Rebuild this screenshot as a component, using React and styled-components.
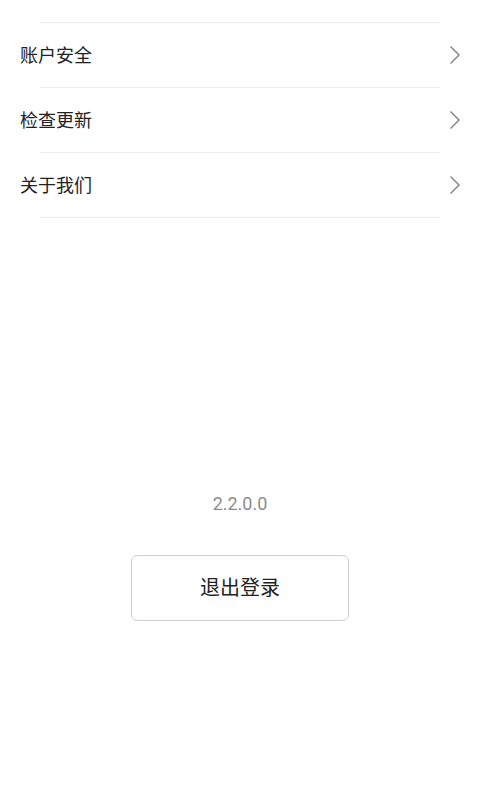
import React from "react";
import styled, { createGlobalStyle } from "styled-components";

const Global = createGlobalStyle`
  html, body { margin: 0; padding: 0; background: #fff; }
  body { font-family: "Noto Sans CJK SC", "Noto Sans", sans-serif; }
`;

const Page = styled.div`
  width: 480px;
  height: 800px;
  display: flex;
  flex-direction: column;
  background: #fff;
`;

const List = styled.div`
  margin-top: 22px;
  display: flex;
  flex-direction: column;
`;

const Divider = styled.div`
  height: 1px;
  margin: 0 40px;
  background: #ececec;
`;

const Row = styled.div`
  height: 64px;
  display: flex;
  align-items: center;
  justify-content: space-between;
  padding: 0 19px 0 20px;
`;

const Label = styled.span`
  font-size: 18px;
  color: #222;
  line-height: 1;
  padding-bottom: 2px;
`;

const Chevron = () => (
  <svg width="12" height="20" viewBox="0 0 12 20">
    <path d="M1.5 1.5 L10 10 L1.5 18.5" fill="none" stroke="#8a8a8a" strokeWidth="1.5" />
  </svg>
);

const Version = styled.div`
  margin-top: 274px;
  text-align: center;
  font-family: Roboto, "Noto Sans", sans-serif;
  font-size: 18px;
  color: #8c8c8c;
  line-height: 24px;
`;

const Button = styled.button`
  align-self: center;
  margin-top: 39px;
  width: 218px;
  height: 66px;
  padding: 0 0 3px;
  border: 1px solid #cfcfcf;
  border-radius: 6px;
  background: #fff;
  font-family: "Noto Sans CJK SC", sans-serif;
  font-size: 20px;
  color: #222;
`;

const items = ["账户安全", "检查更新", "关于我们"];

export default function App() {
  return (
    <Page>
      <Global />
      <List>
        <Divider />
        {items.map((t) => (
          <React.Fragment key={t}>
            <Row>
              <Label>{t}</Label>
              <Chevron />
            </Row>
            <Divider />
          </React.Fragment>
        ))}
      </List>
      <Version>2.2.0.0</Version>
      <Button>退出登录</Button>
    </Page>
  );
}
